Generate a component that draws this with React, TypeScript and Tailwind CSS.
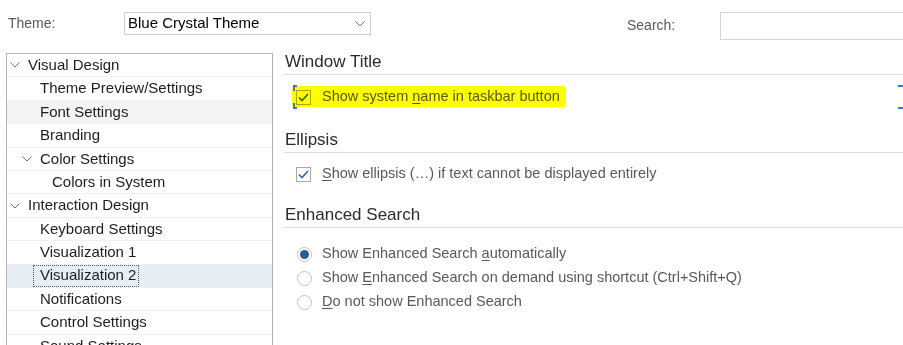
import React from 'react';

type TreeNode = {
  label: string;
  level: 0 | 1 | 2;
  expandable?: boolean;
  state?: 'hover' | 'selected';
};

const tree: TreeNode[] = [
  { label: 'Visual Design', level: 0, expandable: true },
  { label: 'Theme Preview/Settings', level: 1 },
  { label: 'Font Settings', level: 1, state: 'hover' },
  { label: 'Branding', level: 1 },
  { label: 'Color Settings', level: 1, expandable: true },
  { label: 'Colors in System', level: 2 },
  { label: 'Interaction Design', level: 0, expandable: true },
  { label: 'Keyboard Settings', level: 1 },
  { label: 'Visualization 1', level: 1 },
  { label: 'Visualization 2', level: 1, state: 'selected' },
  { label: 'Notifications', level: 1 },
  { label: 'Control Settings', level: 1 },
  { label: 'Sound Settings', level: 1 },
];

const indent = ['pl-[3px]', 'pl-[15px]', 'pl-[27px]'];

const Chevron = ({ className = '' }: { className?: string }) => (
  <svg width="10" height="6" viewBox="0 0 10 6" className={className}>
    <polyline points="0.5,0.5 5,5 9.5,0.5" fill="none" stroke="#707070" strokeWidth="1" />
  </svg>
);

const CheckBox = () => (
  <span className="w-[15px] h-[15px] border border-[#a8a8a8] bg-white flex items-center justify-center shrink-0">
    <svg width="11" height="9" viewBox="0 0 11 9">
      <polyline points="1,4.5 4,7.5 10,1" fill="none" stroke="#2a67ad" strokeWidth="1.6" />
    </svg>
  </span>
);

const Radio = ({ checked }: { checked?: boolean }) => (
  <span className="w-[15px] h-[15px] rounded-full border border-[#c4c4c4] bg-white flex items-center justify-center shrink-0">
    {checked && <span className="w-[9px] h-[9px] rounded-full bg-[#2c5d8c]" />}
  </span>
);

const SectionTitle = ({ children }: { children: React.ReactNode }) => (
  <div className="h-[24px] border-b border-[#dedede] text-[17px] leading-[22px] text-[#2b2b2b] pl-[1px]">
    {children}
  </div>
);

export default function App() {
  return (
    <div
      className="w-[903px] h-[345px] overflow-hidden bg-white flex flex-col"
      style={{ fontFamily: '"Liberation Sans", Arial, sans-serif' }}
    >
      {/* top bar */}
      <div className="h-[51px] shrink-0 flex items-start pt-[12px]">
        <span className="ml-[8px] w-[116px] shrink-0 h-[23px] flex items-center text-[14px] text-[#595959]">Theme:</span>
        <div className="w-[247px] shrink-0 h-[23px] border border-[#cfcfcf] bg-white flex items-center pl-[3px] pr-[4px]">
          <span className="text-[15px] text-black flex-1">Blue Crystal Theme</span>
          <Chevron className="mr-[1px]" />
        </div>
        <span className="ml-[256px] w-[93px] shrink-0 h-[27px] flex items-center text-[14px] text-[#595959]">Search:</span>
        <div className="w-[200px] h-[28px] border border-[#d4d4d4] bg-white shrink-0" />
      </div>

      <div className="flex flex-1 min-h-0">
        {/* tree */}
        <div className="ml-[6px] mt-[2px] w-[267px] border border-b-0 border-[#b4b4b4] text-[15px] text-[#1e1e1e] shrink-0">
          {tree.map((n) => (
            <div
              key={n.label}
              className={`h-[23.4px] border-b border-[#f0f0f0] flex items-center ${indent[n.level]} ${
                n.state === 'hover' ? 'bg-[#f3f3f3]' : n.state === 'selected' ? 'bg-[#e6edf5]' : ''
              }`}
            >
              <span className="w-[18px] shrink-0 flex items-center">{n.expandable && <Chevron />}</span>
              {n.state === 'selected' ? (
                <span className="-ml-[7px] h-full flex items-center pl-[6px] pr-[2px] border border-dotted border-[#5a5a5a]">
                  {n.label}
                </span>
              ) : (
                <span className="whitespace-nowrap">{n.label}</span>
              )}
            </div>
          ))}
        </div>

        {/* settings */}
        <div className="ml-[11px] flex-1 flex flex-col text-[14.5px] text-[#595959]">
          <SectionTitle>Window Title</SectionTitle>
          <div className="relative mt-[11px] h-[22px] flex items-center pl-[12px]">
            <CheckBox />
            <span className="ml-[11px]">
              Show system <u className="decoration-[#595959] underline-offset-2">n</u>ame in taskbar button
            </span>
            <span className="absolute left-[8px] top-0 w-[274px] h-[21px] rounded-[3px] bg-[#ffff00] mix-blend-multiply" />
            <span className="absolute left-[9px] -top-[1px] w-[4px] h-[6px] border-l-2 border-t-2 border-[#3b78c0]" />
            <span className="absolute left-[9px] top-[17px] w-[4px] h-[6px] border-l-2 border-b-2 border-[#3b78c0]" />
            <span className="absolute right-0 -top-[1px] w-[5px] h-[2px] bg-[#3b78c0]" />
            <span className="absolute right-0 top-[21px] w-[5px] h-[2px] bg-[#3b78c0]" />
          </div>

          <div className="mt-[21px]">
            <SectionTitle>Ellipsis</SectionTitle>
          </div>
          <div className="mt-[10px] h-[22px] flex items-center pl-[12px]">
            <CheckBox />
            <span className="ml-[11px]">
              <u className="decoration-[#595959] underline-offset-2">S</u>how ellipsis (…) if text cannot be displayed entirely
            </span>
          </div>

          <div className="mt-[19px]">
            <SectionTitle>Enhanced Search</SectionTitle>
          </div>
          <div className="mt-[14px] flex flex-col">
            <div className="h-[24px] flex items-center pl-[13px]">
              <Radio checked />
              <span className="ml-[10px]">
                Show Enhanced Search <u className="decoration-[#595959] underline-offset-2">a</u>utomatically
              </span>
            </div>
            <div className="h-[24px] flex items-center pl-[13px]">
              <Radio />
              <span className="ml-[10px]">
                Show <u className="decoration-[#595959] underline-offset-2">E</u>nhanced Search on demand using shortcut (Ctrl+Shift+Q)
              </span>
            </div>
            <div className="h-[24px] flex items-center pl-[13px]">
              <Radio />
              <span className="ml-[10px]">
                <u className="decoration-[#595959] underline-offset-2">D</u>o not show Enhanced Search
              </span>
            </div>
          </div>
        </div>
      </div>
    </div>
  );
}
